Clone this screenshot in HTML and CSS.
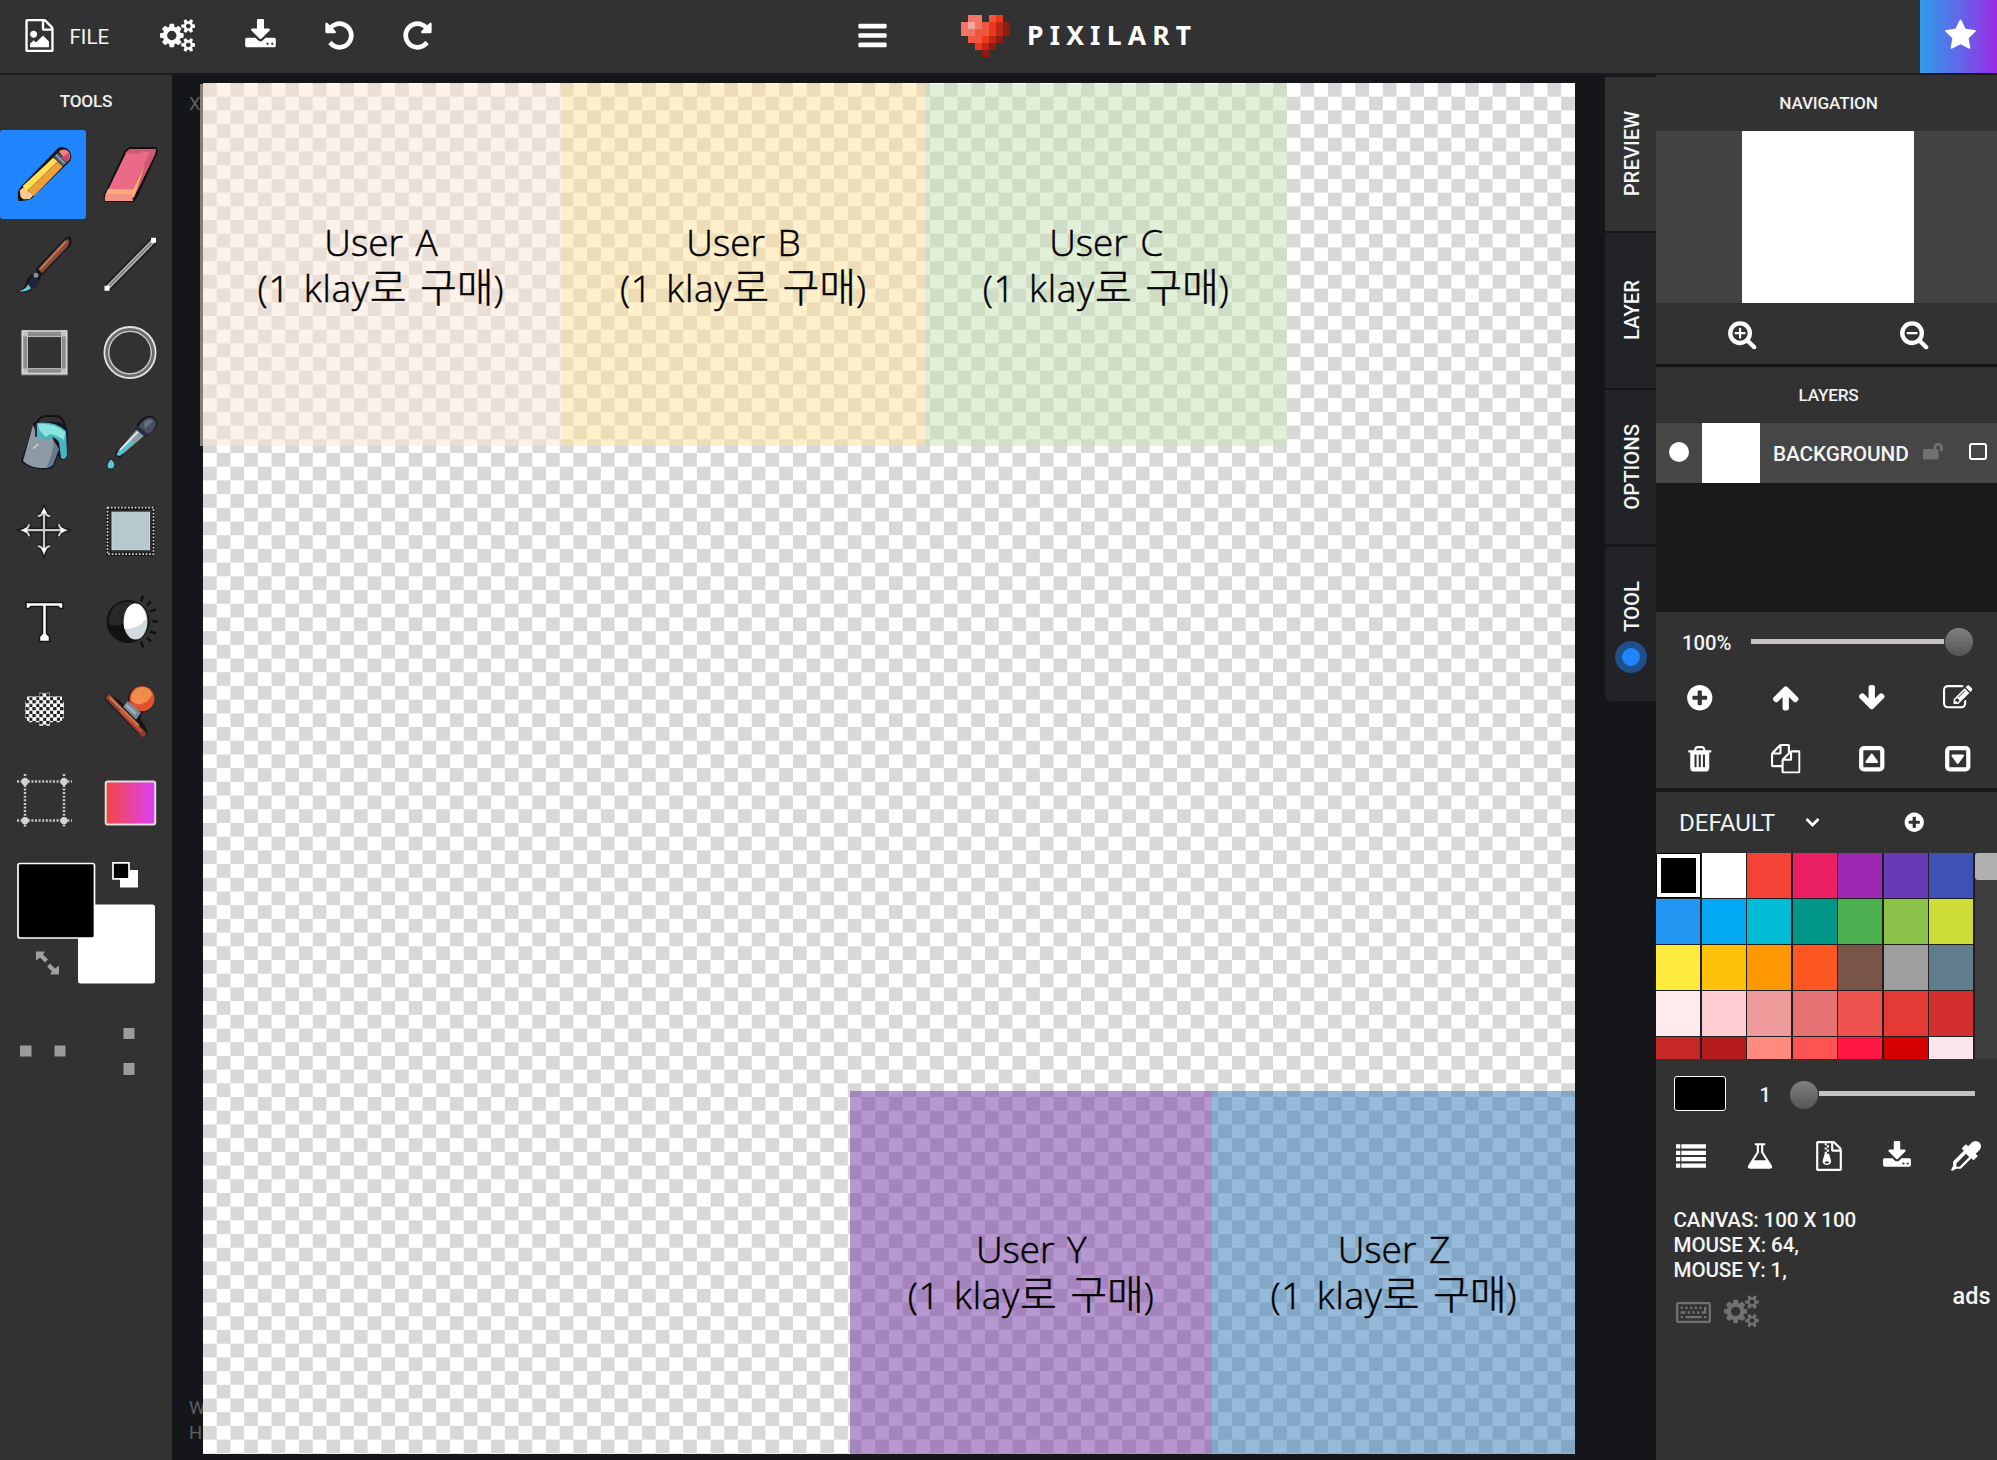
FILE: index.html
```html
<!DOCTYPE html>
<html lang="ko">
<head>
<meta charset="utf-8">
<title>Pixilart</title>
<link rel="stylesheet" href="styles.css">
</head>
<body>
<svg class="defs" width="0" height="0">
<symbol id="bars" viewBox="0 0 1792 1792"><path d="M1664 1344v128q0 26-19 45t-45 19h-1408q-26 0-45-19t-19-45v-128q0-26 19-45t45-19h1408q26 0 45 19t19 45zm0-512v128q0 26-19 45t-45 19h-1408q-26 0-45-19t-19-45v-128q0-26 19-45t45-19h1408q26 0 45 19t19 45zm0-512v128q0 26-19 45t-45 19h-1408q-26 0-45-19t-19-45v-128q0-26 19-45t45-19h1408q26 0 45 19t19 45z"/></symbol>
<symbol id="star" viewBox="0 0 1792 1792"><path d="M1728 647q0 22-26 48l-363 354 86 500q1 7 1 20 0 21-10.500 35.500t-30.500 14.500q-19 0-40-12l-449-236-449 236q-22 12-40 12-21 0-31.500-14.500t-10.500-35.500q0-6 2-20l86-500-364-354q-25-27-25-48 0-37 56-46l502-73 225-455q19-41 49-41t49 41l225 455 502 73q56 9 56 46z"/></symbol>
<symbol id="undo" viewBox="0 0 1792 1792"><path d="M1664 896q0 156-61 298t-164 245-245 164-298 61q-172 0-327-72.500t-264-204.500q-7-10-6.500-22.500t8.500-20.500l137-138q10-9 25-9 16 2 23 12 73 95 179 147t225 52q104 0 198.500-40.500t163.500-109.500 109.500-163.500 40.500-198.500-40.500-198.500-109.500-163.500-163.500-109.500-198.500-40.500q-98 0-188 35.500t-160 101.500l137 138q31 30 14 69-17 40-59 40h-448q-26 0-45-19t-19-45v-448q0-42 40-59 39-17 69 14l130 129q107-101 244.500-156.500t284.500-55.500q156 0 298 61t245 164 164 245 61 298z"/></symbol>
<symbol id="plus" viewBox="0 0 1792 1792"><path d="M1344 960v-128q0-26-19-45t-45-19h-256v-256q0-26-19-45t-45-19h-128q-26 0-45 19t-19 45v256h-256q-26 0-45 19t-19 45v128q0 26 19 45t45 19h256v256q0 26 19 45t45 19h128q26 0 45-19t19-45v-256h256q26 0 45-19t19-45zm320-64q0 209-103 385.500t-279.500 279.500-385.500 103-385.500-103-279.500-279.500-103-385.500 103-385.500 279.500-279.500 385.500-103 385.500 103 279.500 279.500 103 385.500z"/></symbol>
<symbol id="zoomin" viewBox="0 0 1792 1792"><path d="M1088 800v64q0 13-9.500 22.500t-22.500 9.500h-224v224q0 13-9.500 22.500t-22.500 9.500h-64q-13 0-22.500-9.500t-9.500-22.500v-224h-224q-13 0-22.500-9.500t-9.500-22.500v-64q0-13 9.500-22.500t22.500-9.500h224v-224q0-13 9.500-22.500t22.500-9.500h64q13 0 22.500 9.500t9.500 22.500v224h224q13 0 22.500 9.500t9.500 22.500zm128 32q0-185-131.500-316.500t-316.500-131.500-316.500 131.500-131.500 316.500 131.500 316.500 316.500 131.500 316.500-131.500 131.500-316.500zm512 832q0 53-37.500 90.500t-90.500 37.500q-54 0-90-38l-343-342q-179 124-399 124-143 0-273.500-55.500t-225-150-150-225-55.500-273.500 55.500-273.500 150-225 225-150 273.500-55.500 273.500 55.500 225 150 150 225 55.500 273.500q0 220-124 399l343 343q37 37 37 90z"/></symbol>
<symbol id="zoomout" viewBox="0 0 1792 1792"><path d="M1088 800v64q0 13-9.500 22.500t-22.500 9.500h-576q-13 0-22.500-9.500t-9.500-22.500v-64q0-13 9.500-22.500t22.500-9.500h576q13 0 22.500 9.500t9.500 22.500zm128 32q0-185-131.500-316.500t-316.500-131.500-316.500 131.500-131.500 316.500 131.500 316.500 316.500 131.500 316.500-131.500 131.500-316.500zm512 832q0 53-37.500 90.500t-90.500 37.500q-54 0-90-38l-343-342q-179 124-399 124-143 0-273.500-55.500t-225-150-150-225-55.500-273.500 55.500-273.500 150-225 225-150 273.500-55.500 273.500 55.500 225 150 150 225 55.500 273.500q0 220-124 399l343 343q37 37 37 90z"/></symbol>
<symbol id="arrow" viewBox="0 0 1792 1792"><path d="M1675 971q0 51-37 90l-75 75q-38 38-91 38-54 0-90-38l-294-293v704q0 52-37.500 84.500t-90.500 32.500h-128q-53 0-90.500-32.500t-37.500-84.500v-704l-294 293q-36 38-90 38t-90-38l-75-75q-38-38-38-90 0-53 38-91l651-651q35-37 90-37 54 0 91 37l651 651q37 39 37 91z"/></symbol>
<symbol id="trash" viewBox="0 0 1792 1792"><path d="M704 1376v-704q0-14-9-23t-23-9h-64q-14 0-23 9t-9 23v704q0 14 9 23t23 9h64q14 0 23-9t9-23zm256 0v-704q0-14-9-23t-23-9h-64q-14 0-23 9t-9 23v704q0 14 9 23t23 9h64q14 0 23-9t9-23zm256 0v-704q0-14-9-23t-23-9h-64q-14 0-23 9t-9 23v704q0 14 9 23t23 9h64q14 0 23-9t9-23zm-544-992h448l-48-117q-7-9-17-11h-317q-10 2-17 11zm928 32v64q0 14-9 23t-23 9h-96v948q0 83-47 143.500t-113 60.500h-832q-66 0-113-58.500t-47-141.500v-952h-96q-14 0-23-9t-9-23v-64q0-14 9-23t23-9h309l70-167q15-37 54-63t79-26h320q40 0 79 26t54 63l70 167h309q14 0 23 9t9 23z"/></symbol>
<symbol id="copy" viewBox="0 0 1792 1792"><path d="M1696 384q40 0 68 28t28 68v1216q0 40-28 68t-68 28h-960q-40 0-68-28t-28-68v-288h-544q-40 0-68-28t-28-68v-672q0-40 20-88t48-76l408-408q28-28 76-48t88-20h416q40 0 68 28t28 68v328q68-40 128-40h416zm-544 213l-299 299h299v-299zm-640-384l-299 299h299v-299zm196 647l316-316v-416h-384v416q0 40-28 68t-68 28h-416v640h512v-256q0-40 20-88t48-76zm956 804v-1152h-384v416q0 40-28 68t-68 28h-416v640h896z"/></symbol>
<symbol id="edit" viewBox="0 0 1792 1792"><path d="M888 1184l116-116-152-152-116 116v56h96v96h56zm440-720q-16-16-33 1l-350 350q-17 17-1 33t33-1l350-350q17-17 1-33zm80 594v190q0 119-84.500 203.500t-203.500 84.500h-832q-119 0-203.500-84.500t-84.500-203.500v-832q0-119 84.500-203.500t203.500-84.500h832q63 0 117 25 15 7 18 23 3 17-9 29l-49 49q-14 14-32 8-23-6-45-6h-832q-66 0-113 47t-47 113v832q0 66 47 113t113 47h832q66 0 113-47t47-113v-126q0-13 9-22l64-64q15-15 35-7t20 29zm-96-738l288 288-672 672h-288v-288zm444 132l-92 92-288-288 92-92q28-28 68-28t68 28l152 152q28 28 28 68t-28 68z"/></symbol>
<symbol id="caret" viewBox="0 0 1792 1792"><path fill-rule="evenodd" d="M416 128h960a288 288 0 0 1 288 288v960a288 288 0 0 1-288 288h-960a288 288 0 0 1-288-288v-960a288 288 0 0 1 288-288zM416 384a32 32 0 0 0-32 32v960a32 32 0 0 0 32 32h960a32 32 0 0 0 32-32v-960a32 32 0 0 0-32-32zM576 1152q-85-20-52-101l320-448q52-54 104 0l320 448q33 81-52 101z"/></symbol>
<symbol id="cogs" viewBox="0 0 1920 1792"><path d="M896 896q0-106-75-181t-181-75-181 75-75 181 75 181 181 75 181-75 75-181zm768 512q0-52-38-90t-90-38-90 38-38 90q0 53 37.500 90.500t90.500 37.500 90.500-37.500 37.500-90.500zm0-1024q0-52-38-90t-90-38-90 38-38 90q0 53 37.500 90.500t90.500 37.500 90.500-37.500 37.500-90.500zm-384 421v185q0 10-7 19.500t-16 10.500l-155 24q-11 35-32 76 34 48 90 115 7 11 7 20 0 12-7 19-23 30-82.500 89.500t-78.500 59.500q-11 0-21-7l-115-90q-37 19-77 31-11 108-23 155-7 24-30 24h-186q-11 0-20-7.500t-10-17.500l-23-153q-34-10-75-31l-118 89q-7 7-20 7-11 0-21-8-144-133-144-160 0-9 7-19 10-14 41-53t47-61q-23-44-35-82l-152-24q-10-1-17-9.500t-7-19.500v-185q0-10 7-19.500t16-10.500l155-24q11-35 32-76-34-48-90-115-7-11-7-20 0-12 7-20 22-30 82-89t79-59q11 0 21 7l115 90q34-18 77-32 11-108 23-154 7-24 30-24h186q11 0 20 7.500t10 17.500l23 153q34 10 75 31l118-89q8-7 20-7 11 0 21 8 144 133 144 160 0 8-7 19-12 16-42 54t-45 60q23 48 34 82l152 23q10 2 17 10.500t7 19.500zm640 533v140q0 16-149 31-12 27-30 52 51 113 51 138 0 4-4 7-122 71-124 71-8 0-46-47t-52-68q-20 2-30 2t-30-2q-14 21-52 68t-46 47q-2 0-124-71-4-3-4-7 0-25 51-138-18-25-30-52-149-15-149-31v-140q0-16 149-31 13-29 30-52-51-113-51-138 0-4 4-7 4-2 35-20t59-34 30-16q8 0 46 46.500t52 67.500q20-2 30-2t30 2q51-71 92-112l6-2q4 0 124 70 4 3 4 7 0 25-51 138 17 23 30 52 149 15 149 31zm0-1024v140q0 16-149 31-12 27-30 52 51 113 51 138 0 4-4 7-122 71-124 71-8 0-46-47t-52-68q-20 2-30 2t-30-2q-14 21-52 68t-46 47q-2 0-124-71-4-3-4-7 0-25 51-138-18-25-30-52-149-15-149-31v-140q0-16 149-31 13-29 30-52-51-113-51-138 0-4 4-7 4-2 35-20t59-34 30-16q8 0 46 46.500t52 67.500q20-2 30-2t30 2q51-71 92-112l6-2q4 0 124 70 4 3 4 7 0 25-51 138 17 23 30 52 149 15 149 31z"/></symbol>
<symbol id="download" viewBox="0 0 1792 1792"><path d="M1344 1344q0-26-19-45t-45-19-45 19-19 45 19 45 45 19 45-19 19-45zm256 0q0-26-19-45t-45-19-45 19-19 45 19 45 45 19 45-19 19-45zm128-224v320q0 40-28 68t-68 28h-1472q-40 0-68-28t-28-68v-320q0-40 28-68t68-28h465l135 136q58 56 136 56t136-56l136-136h464q40 0 68 28t28 68zm-325-569q17 41-14 70l-448 448q-18 19-45 19t-45-19l-448-448q-31-29-14-70 17-39 59-39h256v-448q0-26 19-45t45-19h256q26 0 45 19t19 45v448h256q42 0 59 39z"/></symbol>
<symbol id="image" viewBox="0 0 1792 1792"><path d="M1596 380q28 28 48 76t20 88v1152q0 40-28 68t-68 28h-1344q-40 0-68-28t-28-68v-1600q0-40 28-68t68-28h896q40 0 88 20t76 48zm-444-244v376h376q-10-29-22-41l-313-313q-12-12-41-22zm384 1528v-1024h-416q-40 0-68-28t-28-68v-416h-768v1536h1280zm-128-448v320h-1024v-192l192-192 128 128 384-384zm-832-192q-80 0-136-56t-56-136 56-136 136-56 136 56 56 136-56 136-136 56z"/></symbol>
<symbol id="zip" viewBox="0 0 1792 1792"><path d="M1596 380q28 28 48 76t20 88v1152q0 40-28 68t-68 28h-1344q-40 0-68-28t-28-68v-1600q0-40 28-68t68-28h896q40 0 88 20t76 48zm-444-244v376h376q-10-29-22-41l-313-313q-12-12-41-22zm384 1528v-1024h-416q-40 0-68-28t-28-68v-416h-768v1536h1280z"/><path fill-rule="evenodd" d="M640 128h128v128h-128zM768 256h128v128h-128zM640 384h128v128h-128zM768 512h128v128h-128zM640 640h128v128h128l107 349q21 66 21 99 0 100-73 162t-183 62-183-62-73-162q0-33 21-99l107-349zM768 1344q53 0 90-19t37-45-37-45-90-19-90 19-37 45 37 45 90 19z"/></symbol>
<symbol id="dropper" viewBox="0 0 1792 1792"><path d="M1698 94q94 94 94 226.500t-94 225.500l-225 223 104 104q10 10 10 23t-10 23l-210 210q-10 10-23 10t-23-10l-105-105-603 603q-37 37-90 37h-203l-256 128-64-64 128-256v-203q0-53 37-90l603-603-105-105q-10-10-10-23t10-23l210-210q10-10 23-10t23 10l104 104 223-225q93-94 225.500-94t226.500 94zm-1186 1442l576-576-192-192-576 576v192h192z"/></symbol>
<symbol id="flask" viewBox="0 0 1792 1792"><path d="M1591 1448q56 89 21.500 152.500t-140.500 63.500h-1152q-106 0-140.500-63.500t21.500-152.500l503-793v-399h-64q-26 0-45-19t-19-45 19-45 45-19h512q26 0 45 19t19 45-19 45-45 19h-64v399zm-779-725l-272 429h712l-272-429-20-31v-436h-128v436z"/></symbol>
<symbol id="list" viewBox="0 0 1792 1792"><path d="M0 192h256v256h-256zM320 192h1472v256h-1472zM0 576h256v256h-256zM320 576h1472v256h-1472zM0 960h256v256h-256zM320 960h1472v256h-1472zM0 1344h256v256h-256zM320 1344h1472v256h-1472z"/></symbol>
<symbol id="keyboard" viewBox="0 0 1920 1792"><path fill-rule="evenodd" d="M128 384h1664a128 128 0 0 1 128 128v896a128 128 0 0 1-128 128h-1664a128 128 0 0 1-128-128v-896a128 128 0 0 1 128-128zM128 512v896h1664v-896zM256 1152h128v128h-128zM512 1152h896v128h-896zM1536 1152h128v128h-128zM256 896h256v128h-256zM640 896h128v128h-128zM896 896h128v128h-128zM1152 896h128v128h-128zM256 640h128v128h-128zM512 640h128v128h-128zM768 640h128v128h-128zM1024 640h128v128h-128zM1280 640h128v128h-128zM1536 640h128v384h-256v-128h128z"/></symbol>
</svg>

<header class="topbar">
  <div class="menu">
    <svg class="i33"><use href="#image"/></svg><span class="file">FILE</span>
    <svg class="i33 cg"><use href="#cogs"/></svg>
    <svg class="i33 dl"><use href="#download"/></svg>
    <svg class="i33 un"><use href="#undo"/></svg>
    <svg class="i33 re"><use href="#undo"/></svg>
  </div>
  <svg class="i33"><use href="#bars"/></svg>
  <svg class="heart" viewBox="0 0 7 6" shape-rendering="crispEdges">
    <path fill="#f37565" d="M1 0h2v2h-1v1h-2v-2h1z"/><path fill="#f7a79f" d="M1 1h1v1h-1z"/>
    <path fill="#f05540" d="M4 0h1v1h-1zM3 1h1v1h-1zM2 2h2v1h-2zM1 3h2v1h-2z"/>
    <path fill="#ee371a" d="M5 0h1v1h-1zM4 1h1v2h-1v1h-1v-1h1zM2 4h1v1h-1z"/>
    <path fill="#b92814" d="M5 1h1v2h-1v1h-1v-1h1zM3 4h1v1h-1z"/>
    <path fill="#8f1d0f" d="M6 1h1v2h-1v1h-1v1h-1v1h-1v-1h1v-1h1v-1h1z"/>
  </svg>
  <span class="brand">PIXILART</span>
  <div class="premium"><svg class="i33"><use href="#star"/></svg></div>
</header>

<main class="editor">
  <aside class="tools">
    <h2 class="title">TOOLS</h2>
    <div class="toolgrid">
      <svg class="tool active" viewBox="0 130 86 89.7">
        <path d="M58 148.500q6-3 11 1.500 4 5 2 11l-39 38q-3 3-14 3-2-9 2-14z" fill="#17171f"/>
        <path d="M19.500 191l4-3 10 8-4 4-9 .5z" fill="#ffc98d"/><path d="M18 196l6 5-6 .5z" fill="#111"/>
        <path d="M22.500 187l31-29 9.500 9-29 30-4-4-3-3z" fill="#eda13c"/><path d="M22.500 187l31-29 4 4-31 30z" fill="#ffe052"/><path d="M27 192l31-30" stroke="#c9802f" stroke-width="1"/>
        <path d="M54 157l4-4 10 9-5 5z" fill="#515d6d"/><path d="M56 155l9 9" stroke="#9aa9b0" stroke-width="1.500"/>
        <path d="M59 152q4-4 9-1 4 4 1.500 9.500l-2 1.500z" fill="#ee8080"/><path d="M62 158l7-5 1 6-3 3z" fill="#cc4a67"/>
      </svg>
      <svg class="tool" viewBox="86 130 86 89.7">
        <path d="M129 147h27q2 1 1.500 6l-20 44-4 5h-28q-3-2-1.500-7l20-43z" fill="#140f12"/>
        <path d="M129.500 149h26.500l-1 5-20 41-1 1q-1-4-4-5l-22-1 18-37z" fill="#ea6a88"/>
        <path d="M129.500 149h26.500l-1 5-18 37-4-3 17-36-8-1-4 3-13-1z" fill="#cf5873"/>
        <path d="M108 189l25 .5 12-25-11 33-29-2z" fill="#ffab78"/><path d="M106 194h26l1 7h-28q-1-3 1-7z" fill="#f19484"/>
      </svg>
      <svg class="tool" viewBox="0 219.7 86 89.7">
        <path d="M70 236q3 3 0 10L41 276q-5 14-15 16-9 1-9-1 8-2 9-9 3-8 9-9 2-2 1-5l28-29q3-3 6-3z" fill="#16151d"/>
        <path d="M68 239q3 2-1 8L42 273l-4-4 24-26q4-4 6-4z" fill="#8a4d36"/><path d="M66 241l-26 28" stroke="#bc7450" stroke-width="2"/>
        <path d="M28 284q3-9 7-8l4 5q-4 9-12 10-7 1-8 0 7-2 9-7z" fill="#22243a"/><path d="M28 284l3 4q-5 4-12 3 7-2 9-7z" fill="#68cbca"/><circle cx="36" cy="275" r="2.500" fill="#87949c"/>
      </svg>
      <svg class="tool" viewBox="86 219.7 86 89.7">
        <path d="M107 288l47-48" stroke="#1d1d1d" stroke-width="8"/><path d="M107 288l47-48" stroke="#b5b5b5" stroke-width="4.500"/><path d="M109 286l43-44" stroke="#777" stroke-width="1.500"/>
        <path d="M104.500 285.500h5v5h-5zM151 237.500h5v5h-5z" fill="#fff"/>
      </svg>
      <svg class="tool" viewBox="0 309.4 86 89.7">
        <rect x="24.500" y="334" width="40" height="38.500" fill="none" stroke="#8d8d8d" stroke-width="6.500"/><path d="M22.500 331.500h44v42.500h-44z" fill="none" stroke="#d5d5d5" stroke-width="1.500"/><path d="M27.500 337h34v32h-34z" fill="none" stroke="#bdbdbd"/><path d="M22 331h6v6h-6zM61 331h6v6h-6zM22 369h6v5h-6zM61 369h6v5h-6z" fill="#d8d8d8" opacity=".7"/>
      </svg>
      <svg class="tool" viewBox="86 309.4 86 89.7">
        <g fill="none"><circle cx="130" cy="353" r="24" stroke="#6c6c6c" stroke-width="3.500"/><circle cx="130" cy="353" r="25.600" stroke="#e2e2e2" stroke-width="1.800"/><circle cx="130" cy="353" r="21.300" stroke="#c6c6c6" stroke-width="1.600"/></g>
      </svg>
      <svg class="tool" viewBox="0 399.1 86 89.7">
        <path d="M37 422q4-6 9-6h11q6 1 8 10" fill="none" stroke="#111" stroke-width="2"/>
        <path d="M34 422l23 0q11 2 11 10l-1 24q-2 6-7 3l-2-4-4 11q-3 4-12 3.500-14-1-21-8z" fill="#141720"/>
        <path d="M33 425l4 10 14-2 6 18-5 14q-4 4-12 3-11-1-17-7z" fill="#8b9aa3"/><path d="M54 441l5 8-6 16q-3 3-7 3 6-10 8-27z" fill="#68788f"/>
        <path d="M37 423q18-2 29 8l1 24q-2 6-6 3l-2-16q-4-5-8-5l-4 4-3-4-3 2q-6-3-5-9z" fill="#48b4c2"/><path d="M38 424q16-1 27 8l-1 8q-7-5-14-6l-4 3-4-4-3-4z" fill="#8ce4df"/><path d="M36 425v12" stroke="#222a3b" stroke-width="2"/><path d="M33 449l5-5" stroke="#c3ced2" stroke-width="2"/>
      </svg>
      <svg class="tool" viewBox="86 399.1 86 89.7">
        <path d="M137 424q7-9 15-8 8 5 3 13l-9 8-4 0-22 21-5-2 0-3 21-22z" fill="#12151b"/><path d="M138 428l7 7-22 19-6 1 1-4z" fill="#8d9da5"/><path d="M116 455l14-15 4 2-14 14z" fill="#53c3cf"/><path d="M120 450l20-20" stroke="#eee" stroke-width="1.500"/>
        <path d="M140 424q7-8 12-6 6 3 3 9-3 6-9 8l-8-7z" fill="#484d5f"/><path d="M144 423q5-5 9-2l-8 8z" fill="#697181"/><path d="M136 427l11 9" stroke="#282b3a" stroke-width="4"/>
        <path d="M111 459q4 3 4 6-1 5-6 4-5-3 2-10z" fill="#5dc7c9" stroke="#14242a"/>
      </svg>
      <svg class="tool" viewBox="0 488.8 86 89.7">
        <path d="M44 510v42M24 530h40M38 516q4 0 6-6 2 6 6 6M38 546q4 0 6 6 2-6 6-6M29 524q0 4-6 6 6 2 6 6M59 524q0 4 6 6-6 2-6 6" fill="none" stroke="#171717" stroke-width="5"/><path d="M44 510v42M24 530h40M38 516q4 0 6-6 2 6 6 6M38 546q4 0 6 6 2-6 6-6M29 524q0 4-6 6 6 2 6 6M59 524q0 4 6 6-6 2-6 6" fill="none" stroke="#c9c9c9" stroke-width="2.200"/><path d="M44 508l3 5h-6zM44 553l3-5h-6zM22 530l5-3v6zM66 530l-5-3v6z" fill="#fff"/>
      </svg>
      <svg class="tool" viewBox="86 488.8 86 89.7">
        <rect x="107.500" y="508" width="46" height="46" fill="#2b2b2b" stroke="#151515" stroke-width="3"/><rect x="107.500" y="507.500" width="46" height="46.500" fill="none" stroke="#d5d5d5" stroke-width="1.700" stroke-dasharray="1.700 1.700"/><rect x="112" y="512" width="37.500" height="37.500" fill="#b5c9cf" stroke="#cbd8dc"/>
      </svg>
      <svg class="tool" viewBox="0 578.5 86 89.7">
        <path d="M26 603h37v6h-3l-2-2H46.500v27l3 3v5h-10v-5l3-3v-27H31l-2 2h-3z" fill="#fff" stroke="#151515" stroke-width="1.500"/>
      </svg>
      <svg class="tool" viewBox="86 578.5 86 89.7">
        <circle cx="128" cy="622" r="21.500" fill="#121212"/><path d="M109 620a19 19 0 0 1 29-15q-18 5-15 19-7 4-14 1z" fill="#282828"/>
        <ellipse cx="135.500" cy="622" rx="12" ry="18" fill="#cfd9de"/><path d="M124 629q-1-23 11-25 9 1 11 15l-4 5q-8 6-18 5z" fill="#fff"/>
        <path d="M141 602l2-6M147 606l4-4M150 612l6-2M152 622h6M150 632l6 2M147 638l4 4M141 642l2 6" stroke="#121212" stroke-width="2.500"/>
      </svg>
      <svg class="tool" viewBox="0 668.2 86 89.7">
        <defs><pattern id="dots" x="25.500" y="693.500" width="6.900" height="6.900" patternUnits="userSpaceOnUse"><path d="M0 3.250h3.850v3.850h-3.850zM3.450-.2h3.850v3.850h-3.850z" fill="#fff"/></pattern></defs>
        <path d="M39 693h11v3.500h12v5h2v17h-2v4H50v3.500H39v-3.500H27v-4h-2v-17h2v-5h12z" fill="#202020"/><path d="M39 693h11v3.500h12v5h2v17h-2v4H50v3.500H39v-3.500H27v-4h-2v-17h2v-5h12z" fill="url(#dots)"/>
      </svg>
      <svg class="tool" viewBox="86 668.2 86 89.7">
        <path d="M106 695q5-2 19 11l3-5a13 13 0 1 1 14 12l-2 6q10 13 6 17-4 3-9-3l-30-31q-3-4-1-7z" fill="#161316"/>
        <circle cx="142" cy="699" r="12.500" fill="#de5231"/><path d="M131 700q0-11 11-13 9 1 10 8-3 7-10 9-6 2-11-4z" fill="#f18d48"/>
        <path d="M128 701l13 12-5 7-13-13z" fill="#73899b"/><path d="M126 705l10 9" stroke="#9eabb2" stroke-width="3"/>
        <path d="M109 698l34 36" stroke="#8e3c30" stroke-width="6" stroke-linecap="round"/><path d="M110 698l28 27" stroke="#c4774e" stroke-width="2.500" stroke-linecap="round"/><path d="M120 711l22 21" stroke="#df5b3b" stroke-width="1.500"/>
      </svg>
      <svg class="tool" viewBox="0 757.9 86 89.7">
        <g stroke="#c9c9c9" stroke-width="2.500" stroke-dasharray="2 1.600"><path d="M17 781.500h55M17 820.500h55M25 774v54M64 774v54"/></g><g fill="#d2d2d2"><circle cx="25" cy="781.500" r="3.700"/><circle cx="64" cy="781.500" r="3.700"/><circle cx="25" cy="820.500" r="3.700"/><circle cx="64" cy="820.500" r="3.700"/></g>
      </svg>
      <svg class="tool" viewBox="86 757.9 86 89.7">
        <defs><linearGradient id="gr"><stop offset="0" stop-color="#f5473f"/><stop offset="1" stop-color="#dc3ffb"/></linearGradient></defs><rect x="105.700" y="781.500" width="49.500" height="43" rx="2" fill="url(#gr)" stroke="#dedede" stroke-width="2"/>
      </svg>
    </div>
    <svg class="swatches" viewBox="0 848.5 172 260">
      <rect x="78" y="905" width="77" height="79" rx="2.500" fill="#fff"/><rect x="18" y="864" width="76.500" height="74.500" rx="2" fill="#000" stroke="#fff" stroke-width="1.700"/>
      <path d="M120 870.500h18v17.500h-18z" fill="#fff"/><path d="M113 863.300h16v16h-16z" fill="#000" stroke="#fff" stroke-width="1.700"/>
      <path d="M36 952h9l-2 3 5 5-3 3-5-5-4 3zM59 975h-9l2-3-5-5 3-3 5 5 4-3z" fill="#a0a0a0"/>
      <path d="M20 1046h11.500v11h-11.500zM54.500 1046h11v11h-11zM123.500 1028.500h11v11h-11zM123.500 1063.500h11v12h-11z" fill="#9b9b9b"/>
    </svg>
  </aside>

  <section class="workspace">
    <span class="coord cx">X</span><span class="coord cw">W</span><span class="coord ch">H</span>
    <div class="canvas">
      <div class="tile a"><span>User A</span><span class="price">(1 klay<b>로</b> <b>구매</b>)</span></div>
      <div class="tile b"><span>User B</span><span class="price">(1 klay<b>로</b> <b>구매</b>)</span></div>
      <div class="tile c"><span>User C</span><span class="price">(1 klay<b>로</b> <b>구매</b>)</span></div>
      <div class="tile y"><span>User Y</span><span class="price">(1 klay<b>로</b> <b>구매</b>)</span></div>
      <div class="tile z"><span>User Z</span><span class="price">(1 klay<b>로</b> <b>구매</b>)</span></div>
    </div>
  </section>

  <nav class="tabs">
    <div class="tab on"><span>PREVIEW</span></div>
    <div class="tab"><span>LAYER</span></div>
    <div class="tab"><span>OPTIONS</span></div>
    <div class="tab last"><span>TOOL</span><i class="dot"></i></div>
  </nav>

  <aside class="panel">
    <section class="nav">
      <h2 class="title">NAVIGATION</h2>
      <div class="view"><div class="paper"></div></div>
      <div class="zooms"><svg><use href="#zoomin"/></svg><svg><use href="#zoomout"/></svg></div>
    </section>
    <section class="layers">
      <h2 class="title">LAYERS</h2>
      <div class="layer">
        <i class="radio"></i><div class="thumb"></div><span class="lname">BACKGROUND</span>
        <svg class="lock" viewBox="0 0 21 17"><path d="M1 6h9.500V4.500a4.700 4.700 0 0 1 9.500 0V7q0 1.500-1.500 1.500T17 7V4.500a2 2 0 0 0-4 0V6h1q1.500 0 1.500 1.500V15q0 1.500-1.500 1.500H1.500Q0 16.500 0 15V7.500Q0 6 1 6z"/></svg>
        <i class="check"></i>
      </div>
      <div class="empty"></div>
      <div class="opacity"><span>100%</span><i class="track"></i><i class="knob"></i></div>
      <div class="actions">
        <svg><use href="#plus"/></svg><svg><use href="#arrow"/></svg><svg class="flip"><use href="#arrow"/></svg><svg><use href="#edit"/></svg>
        <svg><use href="#trash"/></svg><svg><use href="#copy"/></svg><svg><use href="#caret"/></svg><svg class="flip"><use href="#caret"/></svg>
      </div>
    </section>
    <section class="palette">
      <div class="select"><span>DEFAULT</span><svg class="chev" viewBox="0 0 16 11"><path d="M2 2l6 6 6-6"/></svg><svg class="add"><use href="#plus"/></svg></div>
      <div class="scroll">
        <div class="colors">
          <i class="sel"></i><i style="background:#ffffff"></i><i style="background:#f44336"></i><i style="background:#e91e63"></i><i style="background:#9c27b0"></i><i style="background:#673ab7"></i><i style="background:#3f51b5"></i>
          <i style="background:#2196f3"></i><i style="background:#03a9f4"></i><i style="background:#00bcd4"></i><i style="background:#009688"></i><i style="background:#4caf50"></i><i style="background:#8bc34a"></i><i style="background:#cddc39"></i>
          <i style="background:#ffeb3b"></i><i style="background:#ffc107"></i><i style="background:#ff9800"></i><i style="background:#ff5722"></i><i style="background:#795548"></i><i style="background:#9e9e9e"></i><i style="background:#607d8b"></i>
          <i style="background:#ffebee"></i><i style="background:#ffcdd2"></i><i style="background:#ef9a9a"></i><i style="background:#e57373"></i><i style="background:#ef5350"></i><i style="background:#e53935"></i><i style="background:#d32f2f"></i>
          <i style="background:#c62828"></i><i style="background:#b71c1c"></i><i style="background:#ff8a80"></i><i style="background:#ff5252"></i><i style="background:#ff1744"></i><i style="background:#d50000"></i><i style="background:#fce4ec"></i>
        </div>
        <div class="bar"><i></i></div>
      </div>
      <div class="brush"><i class="ink"></i><span>1</span><i class="knob"></i><i class="track"></i></div>
      <div class="ptools"><svg><use href="#list"/></svg><svg><use href="#flask"/></svg><svg><use href="#zip"/></svg><svg><use href="#download"/></svg><svg><use href="#dropper"/></svg></div>
      <div class="info">CANVAS: 100 X 100<br>MOUSE X: 64,<br>MOUSE Y: 1,</div>
      <div class="foot"><svg><use href="#keyboard"/></svg><svg><use href="#cogs"/></svg><span>ads</span></div>
    </section>
  </aside>
</main>
</body>
</html>
```
FILE: styles.css
```css
* { box-sizing: border-box; }
body { margin: 0; width: 1997px; height: 1460px; overflow: hidden; background: #14161a; color: #f4f4f4; font-family: Roboto, sans-serif; font-weight: 500; }
svg { display: block; flex: none; fill: #fff; }
i { display: block; flex: none; }
.defs { position: absolute; }

.topbar { display: flex; align-items: center; height: 75px; padding-bottom: 3px; background: #323232; border-bottom: 2px solid #191a1c; }
.menu { display: flex; align-items: center; width: 855.5px; padding-left: 22.5px; }
.i33 { width: 33px; height: 33px; }
.file { width: 69px; margin-left: 14px; font-size: 20.500px; font-weight: 400; line-height: 30px; padding-top: 4px; }
.menu .cg { width: 35.400px; margin-left: 21.500px; }
.dl { margin-left: 48.500px; }
.un { margin-left: 46.500px; }
.re { margin-left: 45px; transform: scaleX(-1); }
.heart { width: 49px; height: 42px; margin: 2px 0 0 72.500px; }
.brand { margin-left: 17px; width: 875px; font: 700 26.500px/36px "Noto Sans", sans-serif; letter-spacing: 6.200px; color: #fff; }
.premium { display: flex; align-items: center; justify-content: center; align-self: flex-start; width: 77px; height: 73px; margin-left: auto; padding: 0 0 2px 3px; background: linear-gradient(90deg, #2f9cea, #6662e8 55%, #9a2be6); }

.editor { display: flex; height: 1385px; }
.title { margin: 0; font-size: 17.200px; font-weight: 500; text-align: center; letter-spacing: -0.200px; color: #f0f0f0; }

.tools { width: 172px; background: #323232; }
.tools .title { height: 55px; line-height: 53px; }
.toolgrid { display: grid; grid-template-columns: 86px 86px; grid-auto-rows: 89.700px; }
.tool { width: 86px; height: 89.700px; }
.tool.active { height: 88.500px; margin-bottom: 1.200px; background: #2185ff; border-radius: 3px; }
.swatches { width: 172px; height: 260px; }

.workspace { position: relative; width: 1433px; padding: 8px 0 0 31.300px; }
.coord { position: absolute; left: 17px; font-size: 18.500px; font-weight: 400; line-height: 22px; color: #5c5f63; }
.cx { top: 18px; }
.cw { top: 1322px; }
.ch { top: 1347px; }
.canvas { position: relative; width: 1372px; height: 1370.500px; background: conic-gradient(#fff 25%, #d8d8d8 0 50%, #fff 0 75%, #d8d8d8 0) 0 0 / 27.440px 27.410px; }
.tile { position: absolute; display: flex; flex-direction: column; align-items: center; width: 363px; height: 362px; padding-top: 135px; color: #000; font: 300 37px/45px "Open Sans", "Noto Sans CJK KR", sans-serif; white-space: nowrap; word-spacing: 3px; -webkit-text-stroke: .500px #000; }
.tile span { height: 45px; }
.tile .price { line-height: 43px; letter-spacing: .800px; }
.tile b { font: 300 40px/43px "Noto Sans CJK KR", sans-serif; letter-spacing: 0; }
.a { left: -3.300px; top: 1px; width: 362px; background: #fbe5d680; }
.b { left: 358.700px; top: 1px; background: #ffe29880; }
.c { left: 721.700px; top: 1px; width: 362.500px; background: #c5e0b480; }
.y { left: 646.700px; top: 1008px; width: 362.500px; height: 362.500px; background: #7030a080; }
.z { left: 1009.200px; top: 1008px; height: 362.500px; background: #2e75b680; }

.tabs { display: flex; flex-direction: column; gap: 2px; width: 51px; padding-top: 2px; }
.tab { display: flex; align-items: center; justify-content: center; height: 154.300px; padding-left: 3px; background: #212327; }
.tab span { writing-mode: vertical-rl; transform: rotate(180deg); font-size: 20.300px; line-height: 24px; }
.on { background: #323232; }
.last { flex-direction: column; justify-content: flex-start; margin-top: 1px; padding: 34px 0 0; border-bottom-left-radius: 6px; }
.last span { margin-left: 3px; }
.dot { width: 32px; height: 32px; margin-top: 9.500px; border: 7px solid #214f8a; border-radius: 50%; background: #2185ff; }

.panel { width: 341px; padding-top: 2px; background: #323232; }
.nav { height: 290px; border-bottom: 3px solid #141517; }
.nav .title { height: 54px; line-height: 53px; padding-left: 4px; }
.view { height: 172px; padding-left: 86px; background: #434343; }
.paper { width: 172px; height: 172px; background: #fff; }
.zooms { display: flex; gap: 141.500px; padding: 16px 0 0 71px; }
.zooms svg { width: 30.500px; height: 30.500px; }

.layers { height: 425px; border-bottom: 4px solid #17181b; }
.layers .title { height: 56px; line-height: 57px; padding-left: 4px; }
.layer { display: flex; align-items: center; height: 60px; padding-left: 13px; background: #464646; }
.radio { width: 20px; height: 20px; margin-bottom: 2px; border-radius: 50%; background: #fff; }
.thumb { width: 58.500px; height: 60px; margin-left: 12.500px; background: #fff; }
.lname { width: 150px; margin-left: 13px; padding-top: 2px; font-size: 20.800px; letter-spacing: -.100px; }
.lock { width: 21px; height: 17px; margin-bottom: 3px; fill: #707070; }
.check { width: 17.500px; height: 17.500px; margin: 0 0 3px 25px; border: 2px solid #fff; border-radius: 3px; }
.empty { height: 129px; background: #191919; }
.opacity { display: flex; align-items: center; height: 59px; padding: 0 0 0 26px; font-size: 20.300px; }
.opacity span { width: 69px; padding-top: 3px; }
.opacity .track { width: 192.500px; margin-right: 1.500px; }
.track { height: 5px; background: #c5c1c5; }
.knob { width: 28px; height: 28px; border-radius: 50%; background: linear-gradient(#808080, #555); }
.actions { display: grid; grid-template-columns: repeat(4, 86px); grid-auto-rows: 61px; justify-items: center; padding: 12px 0 0 1px; }
.actions svg { width: 29.500px; height: 29.500px; }
.flip { transform: rotate(180deg); }

.select { display: flex; align-items: center; height: 61px; padding-left: 23px; font-size: 24.100px; font-weight: 400; }
.select span { width: 125px; }
.chev { width: 17px; height: 11px; fill: none; stroke: #fff; stroke-width: 2.800; }
.add { width: 22.500px; height: 22.500px; margin-left: 82px; }
.scroll { display: flex; height: 206px; overflow: hidden; }
.colors { display: grid; grid-template-columns: repeat(7, 45.570px); grid-auto-rows: 46.100px; width: 319px; background: #1f1f1f; }
.colors i { margin: 0 1.500px 1.500px 0; }
.colors .sel { border: 4px solid #fff; outline: 1px solid #000; outline-offset: -5px; background: #000; box-shadow: 0 0 0 1px #000; margin: 1px 2px 2px 1px; }
.bar { width: 22px; background: #3d3d3d; }
.bar i { height: 27px; border-radius: 3px 0 0 3px; background: #b0b0b0; }
.brush { display: flex; align-items: center; height: 69px; padding: 0 0 0 17.500px; font-size: 20px; }
.ink { width: 52px; height: 35px; border: 1.500px solid #fff; border-radius: 3px; background: #000; }
.brush span { width: 30px; margin-left: 34px; padding-top: 2px; }
.brush .knob { margin-left: 0; margin-top: 2px; }
.brush .track { width: 156px; margin-left: 1.500px; }
.ptools { display: flex; gap: 38.750px; padding: 13px 0 0 20px; }
.ptools svg { width: 30px; height: 30px; }
.info { padding: 36.500px 0 0 17.500px; font-size: 20.600px; line-height: 25px; letter-spacing: -.100px; }
.foot { display: flex; gap: 13px; padding: 12.500px 0 0 20px; }
.foot svg { width: 35px; height: 32.700px; fill: #717171; }
.foot span { margin: -12px 0 0 180.500px; font-size: 23.500px; line-height: 26px; }
```
